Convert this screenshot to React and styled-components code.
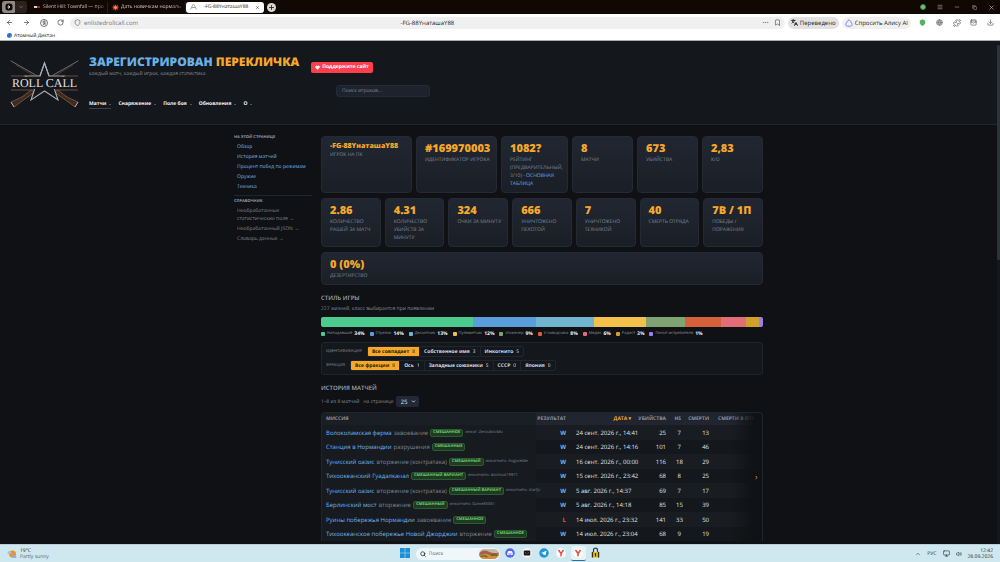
import React from "react";
import styled, { createGlobalStyle, css } from "styled-components";
import {
  ArrowLeft, ArrowRight, RotateCw, Shield, Bookmark, Languages, Puzzle, Download,
  Menu, Minus, Copy, X, Plus, ChevronDown, ChevronUp, Search, Heart, Volume2,
  Monitor, Ellipsis, ChevronRight, Globe, WalletCards,
} from "lucide-react";

const Global = createGlobalStyle`
  *, *::before, *::after { box-sizing: border-box; }
  body {
    margin: 0;
    background: #0f1114;
    color: #dfe5ee;
    font: 5px/8px "Open Sans", "Noto Sans", sans-serif;
    text-rendering: geometricPrecision;
    overflow: hidden;
  }
  button, input, select { font: inherit; color: inherit; margin: 0; padding: 0; border: 0; background: none; text-rendering: inherit; }
  a { color: inherit; text-decoration: none; }
  h1, h2, h3, p, ul, dl, dd { margin: 0; padding: 0; font-weight: inherit; font-size: inherit; }
  ul { list-style: none; }
  svg { display: block; flex: none; }
`;

const Screen = styled.div`
  display: flex;
  flex-direction: column;
  height: 100vh;
`;

/* ---------- browser ---------- */

const TabStrip = styled.div`
  display: flex;
  align-items: center;
  height: 14px;
  flex: none;
  padding: 0 5px 0 2px;
  background: #120803;
  color: #cdc7c4;
`;

const SpacesButton = styled.button`
  && {
    display: grid;
    place-items: center;
    width: ${(p) => (p.$main ? 13 : 12)}px;
    height: 12px;
    border-radius: ${(p) => (p.$main ? "3px 1px 1px 3px" : "1px 3px 3px 1px")};
    background: ${(p) => (p.$main ? "#8d8987" : "#2b211d")};
    color: ${(p) => (p.$main ? "#120803" : "#a8a19d")};
  }
`;

const Tab = styled.div`
  display: flex;
  align-items: center;
  gap: 2px;
  width: 78px;
  height: 11px;
  padding: 0 4px;
  border-radius: 3px;
  white-space: nowrap;
  ${(p) => p.$active && css`background: #fff; color: #22201e;`}
  ${(p) => !p.$active && css`border-right: 1px solid #2a1f1a; border-radius: 0; padding-right: 1px;`}
`;

const TabTitle = styled.span`
  flex: 1;
  text-align: ${(p) => (p.$center ? "center" : "left")};
  ${(p) => !p.$center && css`mask-image: linear-gradient(90deg, #000 80%, #0004);`}
`;

const TabList = styled.div`
  display: flex;
  align-items: center;
  margin-left: 3px;
`;

const NewTab = styled.button`
  && {
    display: grid;
    place-items: center;
    width: 9px;
    height: 9px;
    margin-left: 3px;
    border-radius: 50%;
    background: #d9d6d4;
    color: #2b211d;
  }
`;

const WindowButtons = styled.div`
  display: flex;
  align-items: center;
  gap: 9px;
  margin-left: auto;
  button { display: grid; place-items: center; width: 8px; height: 8px; }
`;

const GreenDot = styled.span`
  width: 6px;
  height: 6px;
  margin-right: 1px;
  border-radius: 50%;
  border: 1px solid #3c8446;
  background: #6fc276;
`;

const Toolbar = styled.div`
  display: flex;
  align-items: center;
  flex: none;
  height: 17px;
  padding: 0 1px;
  background: #fff;
  color: #222;
  font-size: 6px;
`;

const ToolButton = styled.button`
  && {
    display: grid;
    place-items: center;
    width: 17px;
    height: 13px;
    color: ${(p) => p.$color || "#4a4a4a"};
  }
`;

const AddressBar = styled.div`
  display: grid;
  grid-template-columns: 1fr auto 1fr;
  align-items: center;
  flex: 1;
  height: 12px;
  margin: 0 3px 0 1px;
  padding: 0 4px;
  border-radius: 6px;
  background: #f0f0f0;
`;

const AddressPart = styled.div`
  display: flex;
  align-items: center;
  gap: ${(p) => (p.$end ? 5 : 3)}px;
  justify-content: ${(p) => (p.$end ? "flex-end" : "flex-start")};
  color: #777;
`;

const Pill = styled.button`
  && {
    display: flex;
    align-items: center;
    gap: 2px;
    height: 12px;
    margin-right: 3px;
    padding: 0 3px;
    border-radius: 6px;
    background: ${(p) => (p.$strong ? "#e2e2e2" : "#f0f0f0")};
    color: #222;
    white-space: nowrap;
  }
`;

const BookmarkBar = styled.nav`
  display: flex;
  align-items: center;
  flex: none;
  height: 10px;
  padding: 0 7px;
  border-bottom: 1px solid #a9abad;
  background: #fff;
  color: #111;
  a { display: flex; align-items: center; gap: 2px; }
`;

const BlueDot = styled.i`
  width: 5px;
  height: 5px;
  border-radius: 50%;
  background: linear-gradient(135deg, #2a6fd0 55%, #9ed0f5);
`;

/* ---------- page ---------- */

const Viewport = styled.div`
  display: flex;
  flex: 1;
  min-height: 0;
  overflow: hidden;
`;

const Page = styled.div`
  flex: 1;
  min-width: 0;
  background: #0f1114;
`;

const Scrollbar = styled.div`
  width: 3px;
  padding-top: 4px;
  background: #14181c;
  &::before { content: ""; display: block; height: 43%; background: #2b333b; border-radius: 1px; }
`;

const SiteHeader = styled.header`
  display: flex;
  gap: 10px;
  padding: 13px 10px 15px;
  border-bottom: 1px solid #20262d;
  background: #14171b;
`;

const HeaderBody = styled.div`
  flex: 1;
`;

const BrandRow = styled.div`
  display: flex;
  align-items: center;
  gap: 12px;
`;

const SiteTitle = styled.h1`
  && { font-size: 12px; font-weight: 800; }
  line-height: 16px;
  color: #f6a82b;
  white-space: nowrap;
  span { color: #6ab1e8; }
`;

const Tagline = styled.p`
  color: #858d99;
`;

const SupportButton = styled.button`
  && {
    display: flex;
    align-items: center;
    gap: 2px;
    height: 11px;
    margin-top: 2px;
    padding: 0 4px;
    border-radius: 2px;
    background: #ff3f4e;
    color: #fff;
    font-weight: 700;
    white-space: nowrap;
  }
`;

const PlayerSearch = styled.input`
  && {
    display: block;
    width: 94px;
    height: 12px;
    margin: 7px 0 0 247px;
    padding: 0 5px;
    border: 1px solid #242b38;
    border-radius: 3px;
    background: #1d222c;
  }
  &::placeholder { color: #7d8694; }
`;

const SiteNav = styled.nav`
  display: flex;
  gap: 7px;
  margin-top: 3px;
  font-weight: 700;
  color: #eef2f8;
  a { display: flex; align-items: center; gap: 3px; border-bottom: 1px solid transparent; }
  a:first-child { border-color: #3a414b; }
  a::after { content: ""; border: 1px solid transparent; border-top-color: #8f97a3; margin-top: 1px; }
`;

const Layout = styled.div`
  display: grid;
  grid-template-columns: 78px minmax(0, 1fr);
  gap: 9px;
  width: 100%;
  max-width: 529px;
  margin: 0 auto;
  padding-top: 11px;
`;

const SideTitle = styled.h3`
  && { font-size: 4px; font-weight: 700; }
  margin-top: -2px;
  line-height: 8px;
  text-transform: uppercase;
  color: #949ca8;
`;

const SideList = styled.ul`
  display: flex;
  flex-direction: column;
  gap: 2px;
  padding: 1px 0 0 3px;
  color: ${(p) => (p.$muted ? "#7d8591" : "#6fb4ea")};
`;

const SideRule = styled.hr`
  height: 1px;
  margin: 4px 0;
  border: 0;
  background: #20262d;
`;

const Stats = styled.div`
  display: flex;
  flex-direction: column;
  gap: 5px;
`;

const StatRow = styled.dl`
  display: grid;
  grid-template-columns: ${(p) => p.$columns};
  gap: 4px;
`;

const StatCard = styled.div`
  display: flex;
  flex-direction: column-reverse;
  justify-content: flex-end;
  padding: 5px 2px 4px 8px;
  border: 1px solid #242a33;
  border-radius: 4px;
  background: linear-gradient(#212732, #1a1e26);
`;

const StatValue = styled.dd`
  font-size: ${(p) => (p.$small ? 7 : 11)}px;
  line-height: ${(p) => (p.$small ? 9 : 14)}px;
  font-weight: 800;
  color: #f6a82b;
  white-space: nowrap;
`;

const StatLabel = styled.dt`
  text-transform: uppercase;
  color: #848c98;
  a { color: #6fb4ea; }
`;

const SectionTitle = styled.h2`
  && { font-size: 6px; font-weight: 600; }
  margin-top: 9px;
  line-height: 8px;
  text-transform: uppercase;
  color: #a0a9b6;
`;

const Note = styled.p`
  margin-top: 3px;
  color: #848c98;
`;

const ClassBar = styled.div`
  display: flex;
  height: 10px;
  margin-top: 4px;
  border-radius: 2px;
  overflow: hidden;
`;

const ClassSlice = styled.div`
  flex: ${(p) => p.$share} 0 0;
  background: ${(p) => p.$color};
`;

const Legend = styled.ul`
  display: flex;
  gap: 5px;
  margin-top: 3px;
  font-size: 4px;
  white-space: nowrap;
  color: #8a929e;
  li { display: flex; align-items: center; gap: 2px; }
  b { font-size: 5px; color: #eef2f8; }
`;

const Swatch = styled.i`
  width: 4px;
  height: 4px;
  border-radius: 1px;
  background: ${(p) => p.$color};
`;

const Filters = styled.div`
  display: flex;
  flex-direction: column;
  gap: 3px;
  margin-top: 4px;
  padding: 3px 4px;
  border: 1px solid #1e252b;
  border-radius: 3px;
  background: #14181c;
`;

const FilterRow = styled.div`
  display: flex;
  align-items: center;
  gap: 5px;
  > span { font-size: 4px; color: #8a929e; }
`;

const Segments = styled.div`
  display: flex;
  border: 1px solid #20262d;
  border-radius: 2px;
  overflow: hidden;
`;

const Segment = styled.button`
  && {
    height: 9px;
    padding: 0 4px;
    font-weight: 700;
    white-space: nowrap;
    background: ${(p) => (p.$on ? "#f6a82b" : "transparent")};
    color: ${(p) => (p.$on ? "#2b2008" : "#d5dbe4")};
    & + & { border-left: 1px solid #20262d; }
  }
  small { margin-left: 3px; font-size: 5px; font-weight: 600; opacity: 0.75; }
`;

const Pager = styled.div`
  display: flex;
  align-items: center;
  gap: 4px;
  margin-top: 4px;
  color: #848c98;
  label { display: flex; align-items: center; gap: 2px; }
`;

const SelectWrap = styled.span`
  display: flex;
  align-items: center;
  width: 23px;
  height: 11px;
  padding: 0 3px 0 5px;
  border-radius: 2px;
  background: #222835;
  color: #e3e8ef;
  font-size: 6px;
  select { flex: 1; appearance: none; min-width: 0; }
`;

const TableFrame = styled.div`
  position: relative;
  margin-top: 5px;
  border: 1px solid #1f252d;
  border-bottom: 0;
  border-radius: 4px 4px 0 0;
  overflow: hidden;
`;

const MatchTable = styled.table`
  width: 458px;
  border-collapse: collapse;
  table-layout: fixed;
  white-space: nowrap;
  font-size: 6px;
`;

const HeadCell = styled.th`
  height: 12px;
  padding: ${(p) => (p.$left || p.$start ? "0 0 0 4px" : "0 5px 0 0")};
  font-size: 5px;
  font-weight: 700;
  text-align: ${(p) => (p.$left || p.$start ? "left" : "right")};
  text-transform: uppercase;
  background: ${(p) => (p.$left ? "#1a1e25" : "#20252f")};
  color: ${(p) => (p.$sorted ? "#f6a82b" : "#8d95a1")};
`;

const MatchRow = styled.tr`
  height: 14px;
  background: #14171b;
  &:nth-child(odd) { height: 15px; background: #191d22; }
`;

const Cell = styled.td`
  padding: 0 5px;
  text-align: right;
  color: #dfe5ee;
`;

const MissionCell = styled(Cell)`
  padding: 0 0 0 4px;
  text-align: left;
  color: #7d8591;
  background: #171b20;
  > div { display: flex; align-items: center; gap: 2px; }
  a { color: #6fb4ea; }
  small { font-size: 4px; }
`;

const ModeBadge = styled.span`
  padding: 0 2px;
  border: 1px solid #2d5a30;
  border-radius: 2px;
  background: #1e3a22;
  color: #6dd172;
  font-size: 4px;
  line-height: 6px;
  font-weight: 700;
  text-transform: uppercase;
`;

const Outcome = styled.b`
  color: ${(p) => (p.$win ? "#6fb4ea" : "#e2553f")};
`;

const ScrollHint = styled.div`
  position: absolute;
  inset: 0 0 0 auto;
  display: flex;
  align-items: center;
  justify-content: flex-end;
  width: 32px;
  padding-right: 3px;
  background: linear-gradient(90deg, transparent, #0f1114f0 75%);
  color: #f6a82b;
`;

/* ---------- taskbar ---------- */

const Taskbar = styled.footer`
  display: grid;
  grid-template-columns: 1fr auto 1fr;
  align-items: center;
  flex: none;
  height: 18px;
  padding: 0 7px;
  border-top: 1px solid #b9cdd3;
  background: #cfe8ef;
  color: #1c282d;
  line-height: 6px;
`;

const TaskGroup = styled.div`
  display: flex;
  align-items: center;
  gap: ${(p) => p.$gap}px;
  justify-content: ${(p) => (p.$end ? "flex-end" : "flex-start")};
  text-align: ${(p) => (p.$end ? "right" : "left")};
`;

const Faint = styled.div`
  color: #51646b;
`;

const TaskSearch = styled.label`
  display: flex;
  align-items: center;
  gap: 3px;
  width: 84px;
  height: 12px;
  margin: 0 1px;
  padding: 0 1px 0 4px;
  border-radius: 6px;
  background: #f0f7fa;
  input { flex: 1; min-width: 0; }
  input::placeholder { color: #5b666b; }
`;

const TaskButton = styled.button`
  && {
    display: grid;
    place-items: center;
    width: 15px;
    height: 15px;
    border-radius: 2px;
    background: ${(p) => (p.$active ? "#e6f4f8" : "transparent")};
    border-bottom: 1px solid ${(p) => (p.$active ? "#2e6f9c" : "transparent")};
  }
`;

function RollCallLogo() {
  return (
    <svg width="69" height="54" viewBox="0 0 69 54" aria-label="Roll Call">
      <g fill="none" strokeLinecap="round">
        <path d="M1 7 L31 24" stroke="#77787b" strokeWidth=".9" />
        <path d="M68 7 L38 24" stroke="#77787b" strokeWidth=".9" />
        <path d="M6 11 L24 22 M63 11 L45 22" stroke="#4c3a2d" strokeWidth=".9" />
        <path d="M22 39 L13 43 M47 39 L56 43" stroke="#8a8a8c" strokeWidth="1.6" />
      </g>
      <path d="M21 36 L25 38 L15 45 L4 53 L1 48 L12 43 Z" fill="#3d2c22" stroke="#8b6045" strokeWidth=".7" />
      <path d="M48 36 L44 38 L54 45 L65 53 L68 48 L57 43 Z" fill="#3d2c22" stroke="#8b6045" strokeWidth=".7" />
      <path d="M1 48 L4 53 M68 48 L65 53" stroke="#c7c7c7" strokeWidth=".8" />
      <path
        d="M34.500 9 L39 22 L54 22 L43 31 L48 46 L34.500 37 L21 46 L26 31 L15 22 L30 22 Z"
        fill="#14171b" stroke="#a9abaf" strokeWidth="1.100"
      />
      <rect x="1" y="23" width="67" height="12" fill="#14171b" />
      <path d="M1 22 H28 M41 22 H68 M1 36 H24 M45 36 H68" stroke="#76523a" strokeWidth=".9" />
      <path d="M30 22 L34.500 9 L39 22" fill="none" stroke="#a9abaf" strokeWidth="1.100" />
      <text x="34.500" y="33" textAnchor="middle" fontFamily="Liberation Serif, serif" fontSize="12" fill="#e0e1e3">
        ROLL CALL
      </text>
    </svg>
  );
}

function SpacesIcon() {
  return (
    <svg width="8" height="8" viewBox="0 0 16 16">
      <rect x="1" y="1" width="14" height="14" rx="5" fill="#120803" />
      <path d="M6 5l4 3-4 3M5 8h4" fill="none" stroke="#e8e4e2" strokeWidth="1.800" />
    </svg>
  );
}

function BurstIcon() {
  return (
    <svg width="7" height="7" viewBox="0 0 14 14">
      <path d="M7 0l1.500 4L12 1l-1 4 3 1-3 2 2 4-4-2-2 4-2-4-4 2 2-4-3-2 3-1-1-4 3.500 3z" fill="#e2452b" />
      <circle cx="7" cy="7" r="2.500" fill="#ff9a5c" />
    </svg>
  );
}

function AliceIcon() {
  return (
    <svg width="8" height="8" viewBox="0 0 16 16">
      <path d="M8 1.500c2 0 6.500 8 6.500 10S12 14.500 8 14.500s-6.500-1-6.500-3S6 1.500 8 1.500z" fill="none" stroke="#6a5cf0" strokeWidth="1.500" />
    </svg>
  );
}

function YandexIcon() {
  return (
    <svg width="10" height="10" viewBox="0 0 20 20">
      <circle cx="10" cy="10" r="9.500" fill="#fff" />
      <path d="M5 4l5 7 5-7M10 10v7" fill="none" stroke="#f2402f" strokeWidth="2.800" />
    </svg>
  );
}

function WindowsIcon() {
  return (
    <svg width="10" height="10" viewBox="0 0 19 19">
      <path d="M0 0h9v9H0zM10 0h9v9h-9zM0 10h9v9H0zM10 10h9v9h-9z" fill="#1c8fdc" />
    </svg>
  );
}

function DiscordIcon() {
  return (
    <svg width="10" height="10" viewBox="0 0 20 20">
      <circle cx="10" cy="10" r="9.500" fill="#5865f2" />
      <path d="M6 6.500q4-1.500 8 0 2 3.500 1.500 7l-2.500 1-1-1.500H8L7 14.500l-2.500-1Q4 10 6 6.500z" fill="#fff" />
      <circle cx="8" cy="10.500" r="1.200" fill="#5865f2" />
      <circle cx="12" cy="10.500" r="1.200" fill="#5865f2" />
    </svg>
  );
}

function MaskIcon() {
  return (
    <svg width="10" height="10" viewBox="0 0 20 20">
      <circle cx="10" cy="10" r="9.500" fill="#f6f6f6" />
      <rect x="3.500" y="5" width="13" height="10" rx="2" fill="#191919" />
      <path d="M6 9l3 1.500M14 9l-3 1.500" stroke="#e04a3a" strokeWidth="1.500" />
    </svg>
  );
}

function TelegramIcon() {
  return (
    <svg width="10" height="10" viewBox="0 0 20 20">
      <circle cx="10" cy="10" r="9.500" fill="#1f93d6" />
      <path d="M4 10l11-4.500-2 9.500-3.500-2.500L8 14v-3z" fill="#fff" />
    </svg>
  );
}

function LockIcon() {
  return (
    <svg width="9" height="12" viewBox="0 0 18 24">
      <path d="M5 12V6q0-4 4-4t4 4v6" fill="none" stroke="#3d3d3d" strokeWidth="2.500" />
      <rect x="1" y="10" width="16" height="11" rx="1" fill="#e8bd2c" />
      <path d="M3 10v11M15 10v11M9 12v7" stroke="#33300f" strokeWidth="2.500" />
    </svg>
  );
}

function LandscapeIcon() {
  return (
    <svg width="20" height="10" viewBox="0 0 40 20">
      <rect width="40" height="20" rx="10" fill="#c9b7a8" />
      <path d="M1 8q8-8 18-3t20 2v7H1z" fill="#a4604a" />
      <path d="M1 13q10-6 20-1t18-3q-1 10-10 11H10Q3 19 1 13z" fill="#d38a3a" />
      <path d="M3 15q8-3 14 1M24 13q6-3 13 0" fill="none" stroke="#4d6b3a" strokeWidth="2.500" />
    </svg>
  );
}

function WeatherIcon() {
  return (
    <svg width="10" height="10" viewBox="0 0 20 20">
      <circle cx="11" cy="10" r="7" fill="#f0912b" />
      <path d="M1 8q0-4 4-4 3 0 4 3 1 3-3 3H3Q1 10 1 8z" fill="#9fc0ea" />
      <path d="M9 16q0-3 3-3 2-2 4 0 3 0 3 3 0 2-2 2h-6q-2 0-2-2z" fill="#8ab0e4" />
    </svg>
  );
}

const classes = [
  ["Нападавший", 34, "#4bcb8e", 345],
  ["Стрелок", 14, "#5a9ddc", 141],
  ["Десантник", 13, "#70b4d0", 132],
  ["Пулеметчик", 12, "#f2c14c", 118],
  ["Инженер", 9, "#7fa371", 88],
  ["У наводчика", 8, "#d4613a", 80],
  ["Медик", 6, "#e26d78", 57],
  ["Радист", 3, "#cfa02a", 30],
  ["Пилот истребителя", 1, "#9a80ec", 9],
];

const statRows = [
  {
    columns: "91fr 81fr 67fr 61fr 61fr 61fr",
    cards: [
      ["-FG-88YнаташаY88", "Игрок на ПК", true],
      ["#169970003", "Идентификатор игрока"],
      ["1082?", <>Рейтинг (предварительный, 3/10) - <a href="#table">основная таблица</a></>],
      ["8", "Матчи"],
      ["673", "Убийства"],
      ["2,83", "K/D"],
    ],
  },
  {
    columns: "repeat(7, minmax(0, 1fr))",
    cards: [
      ["2.86", "Количество рашей за матч"],
      ["4.31", "Количество убийств за минуту"],
      ["324", "Очки за минуту"],
      ["666", "Уничтожено пехотой"],
      ["7", "Уничтожено техникой"],
      ["40", "Смерть отряда"],
      ["7В / 1П", "Победы / поражения"],
    ],
  },
  { columns: "1fr", cards: [["0 (0%)", "Дезертирство"]] },
];

const filters = [
  ["ИДЕНТИФИКАЦИЯ", [["Все совпадает", 8], ["Собственное имя", 3], ["Инкогнито", 5]]],
  ["ФРАКЦИЯ", [["Все фракции", 8], ["Ось", 1], ["Западные союзники", 5], ["СССР", 0], ["Япония", 0]]],
];

const matches = [
  ["Волоколамская ферма", "завоевание", "смешанное", "инког: ZerouknoMu", "W", "24 сент. 2026 г., 14:41", 25, 7, 13],
  ["Станция в Нормандии", "разрушения", "смешанные", "", "W", "24 сент. 2026 г., 14:16", 101, 7, 46],
  ["Тунисский оазис", "вторжение (контратака)", "смешанный", "инкогнито: Angoveide", "W", "16 сент. 2026 г., 00:00", 116, 18, 29],
  ["Тихоокеанский Гуадалканал", "", "смешанный вариант", "инкогнито: davincat19971", "W", "15 сент. 2026 г., 23:42", 68, 8, 25],
  ["Тунисский оазис", "вторжение (контратака)", "смешанный вариант", "инкогнито: startjv", "W", "5 авг. 2026 г., 14:37", 69, 7, 17],
  ["Берлинский мост", "вторжение", "смешанный", "инкогнито: Game85061", "W", "5 авг. 2026 г., 14:18", 85, 15, 39],
  ["Руины побережья Нормандии", "завоевание", "смешанное", "", "L", "14 июл. 2026 г., 23:32", 141, 33, 50],
  ["Тихоокеанское побережье Новой Джорджии", "вторжение", "смешанное", "", "W", "14 июл. 2026 г., 23:04", 68, 9, 19],
];

function Browser() {
  return (
    <>
      <TabStrip>
        <SpacesButton $main aria-label="Пространства"><SpacesIcon /></SpacesButton>
        <SpacesButton aria-label="Список"><ChevronDown size={6} /></SpacesButton>
        <TabList>
          <Tab>
            <svg width="7" height="5" viewBox="0 0 7 5"><rect y="1" width="3" height="2" fill="#d9d3d0" /><rect x="3" y="1" width="3" height="2" fill="#9b2520" /></svg>
            <TabTitle>Silent Hill: Townfall — про</TabTitle>
          </Tab>
          <Tab><BurstIcon /><TabTitle>Дать новичкам нормаль</TabTitle></Tab>
          <Tab $active>
            <svg width="7" height="6" viewBox="0 0 14 12"><path d="M1 11L5 3M13 11L9 3M4 7h6M4 3l3-2 3 2" fill="none" stroke="#8a8a8a" strokeWidth="1.500" /></svg>
            <TabTitle $center>-FG-88YнаташаY88</TabTitle>
            <X size={5} />
          </Tab>
        </TabList>
        <NewTab aria-label="Новая вкладка"><Plus size={7} strokeWidth={3} /></NewTab>
        <WindowButtons>
          <GreenDot />
          <button aria-label="Меню"><Menu size={6} /></button>
          <button aria-label="Свернуть"><Minus size={6} /></button>
          <button aria-label="Развернуть"><Copy size={5} /></button>
          <button aria-label="Закрыть"><X size={7} /></button>
        </WindowButtons>
      </TabStrip>
      <Toolbar>
        <ToolButton aria-label="Назад" $color="#222"><ArrowLeft size={7} /></ToolButton>
        <ToolButton aria-label="Вперёд" $color="#222"><ArrowRight size={7} /></ToolButton>
        <ToolButton aria-label="Яндекс">
          <svg width="8" height="8" viewBox="0 0 16 16"><circle cx="8" cy="8" r="7" fill="none" stroke="#444" strokeWidth="1.500" /><path d="M10 12V4H8.500Q6 4 6 6.300T8.500 8.500H10M8.500 8.500L6 12" fill="none" stroke="#444" strokeWidth="1.500" /></svg>
        </ToolButton>
        <ToolButton aria-label="Обновить" $color="#222"><RotateCw size={7} /></ToolButton>
        <AddressBar>
          <AddressPart><Shield size={7} color="#555" /><span>enlistedrollcall.com</span></AddressPart>
          <span>-FG-88YнаташаY88</span>
          <AddressPart $end><Ellipsis size={7} /><Bookmark size={7} color="#444" /></AddressPart>
        </AddressBar>
        <Pill $strong><Languages size={7} strokeWidth={3} />Переведено</Pill>
        <Pill><AliceIcon />Спросить Алису AI</Pill>
        <ToolButton aria-label="Защита" $color="#3f9a4a"><Shield size={7} fill="#58b062" /></ToolButton>
        <ToolButton aria-label="Сайт" $color="#7b7b7b"><Globe size={7} fill="#b5b5b5" /></ToolButton>
        <ToolButton aria-label="Расширения"><Puzzle size={8} /></ToolButton>
        <ToolButton aria-label="Коллекции"><WalletCards size={7} /></ToolButton>
        <ToolButton aria-label="Загрузки"><Download size={7} /></ToolButton>
      </Toolbar>
      <BookmarkBar><a href="#b"><BlueDot />Атомный Диктан</a></BookmarkBar>
    </>
  );
}

function Header() {
  return (
    <SiteHeader>
      <RollCallLogo />
      <HeaderBody>
        <BrandRow>
          <div>
            <SiteTitle><span>ЗАРЕГИСТРИРОВАН</span> ПЕРЕКЛИЧКА</SiteTitle>
            <Tagline>каждый матч, каждый игрок, каждая статистика</Tagline>
          </div>
          <SupportButton><Heart size={5} fill="#fff" />Поддержите сайт</SupportButton>
        </BrandRow>
        <PlayerSearch aria-label="Поиск игроков" placeholder="Поиск игроков..." />
        <SiteNav>
          {["Матчи", "Снаряжение", "Поле боя", "Обновления", "О"].map((t) => <a key={t} href="#n">{t}</a>)}
        </SiteNav>
      </HeaderBody>
    </SiteHeader>
  );
}

function Side() {
  return (
    <aside>
      <SideTitle>На этой странице</SideTitle>
      <SideList>
        {["Обзор", "История матчей", "Процент побед по режимам", "Оружие", "Техника"].map((t) => (
          <li key={t}><a href="#s">{t}</a></li>
        ))}
      </SideList>
      <SideRule />
      <SideTitle>Справочник</SideTitle>
      <SideList $muted>
        <li><a href="#r">Необработанные<br />статистические поля →</a></li>
        <li><a href="#r">Необработанный JSON →</a></li>
        <li><a href="#r">Словарь данных →</a></li>
      </SideList>
    </aside>
  );
}

function Matches() {
  return (
    <TableFrame>
      <MatchTable>
        <colgroup>
          {[214, 35, 65, 35, 15, 28, 66].map((w, i) => <col key={i} width={w} />)}
        </colgroup>
        <thead>
          <tr>
            <HeadCell $left>Миссия</HeadCell>
            <HeadCell>Результат</HeadCell>
            <HeadCell $sorted>Дата ▾</HeadCell>
            <HeadCell>Убийства</HeadCell>
            <HeadCell>HS</HeadCell>
            <HeadCell>Смерти</HeadCell>
            <HeadCell $start>Смерти в отр</HeadCell>
          </tr>
        </thead>
        <tbody>
          {matches.map(([name, mode, badge, alias, result, date, kills, hs, deaths], i) => (
            <MatchRow key={i}>
              <MissionCell>
                <div>
                  <a href="#m">{name}</a>{mode && <span>{mode}</span>}
                  <ModeBadge>{badge}</ModeBadge>{alias && <small>{alias}</small>}
                </div>
              </MissionCell>
              <Cell><Outcome $win={result === "W"}>{result}</Outcome></Cell>
              <Cell>{date}</Cell>
              <Cell>{kills}</Cell>
              <Cell>{hs}</Cell>
              <Cell>{deaths}</Cell>
              <Cell />
            </MatchRow>
          ))}
        </tbody>
      </MatchTable>
      <ScrollHint><ChevronRight size={5} strokeWidth={4} /></ScrollHint>
    </TableFrame>
  );
}

export default function App() {
  return (
    <Screen>
      <Global />
      <Browser />
      <Viewport>
        <Page>
          <Header />
          <Layout>
            <Side />
            <main>
              <Stats>
                {statRows.map((row, i) => (
                  <StatRow key={i} $columns={row.columns}>
                    {row.cards.map(([value, label, small]) => (
                      <StatCard key={value}>
                        <StatLabel>{label}</StatLabel>
                        <StatValue $small={small}>{value}</StatValue>
                      </StatCard>
                    ))}
                  </StatRow>
                ))}
              </Stats>
              <SectionTitle>Стиль игры</SectionTitle>
              <Note>227 жизней, класс выбирается при появлении</Note>
              <ClassBar>
                {classes.map(([name, , color, share]) => <ClassSlice key={name} $share={share} $color={color} />)}
              </ClassBar>
              <Legend>
                {classes.map(([name, pct, color]) => (
                  <li key={name}><Swatch $color={color} />{name} <b>{pct}%</b></li>
                ))}
              </Legend>
              <Filters>
                {filters.map(([label, options]) => (
                  <FilterRow key={label}>
                    <span>{label}</span>
                    <Segments>
                      {options.map(([name, count], i) => (
                        <Segment key={name} $on={i === 0}>{name}<small>{count}</small></Segment>
                      ))}
                    </Segments>
                  </FilterRow>
                ))}
              </Filters>
              <SectionTitle>История матчей</SectionTitle>
              <Pager>
                <span>1–8 из 8 матчей</span>
                <label htmlFor="size">на странице
                  <SelectWrap>
                    <select id="size" defaultValue="25"><option>25</option><option>50</option></select>
                    <ChevronDown size={5} strokeWidth={4} />
                  </SelectWrap>
                </label>
              </Pager>
              <Matches />
            </main>
          </Layout>
        </Page>
        <Scrollbar />
      </Viewport>
      <Taskbar>
        <TaskGroup $gap={3}>
          <WeatherIcon />
          <div><div>19°C</div><Faint>Partly sunny</Faint></div>
        </TaskGroup>
        <TaskGroup $gap={2}>
          <TaskButton aria-label="Пуск"><WindowsIcon /></TaskButton>
          <TaskSearch>
            <Search size={6} strokeWidth={3} />
            <input aria-label="Поиск" placeholder="Поиск" />
            <LandscapeIcon />
          </TaskSearch>
          <TaskButton aria-label="Discord"><DiscordIcon /></TaskButton>
          <TaskButton aria-label="Игра"><MaskIcon /></TaskButton>
          <TaskButton aria-label="Telegram"><TelegramIcon /></TaskButton>
          <TaskButton aria-label="Яндекс"><YandexIcon /></TaskButton>
          <TaskButton $active aria-label="Яндекс Браузер"><YandexIcon /></TaskButton>
          <TaskButton aria-label="Замок"><LockIcon /></TaskButton>
        </TaskGroup>
        <TaskGroup $gap={6} $end>
          <ChevronUp size={6} />
          <span>РУС</span>
          <Monitor size={7} />
          <Volume2 size={6} />
          <div><div>12:42</div><div>28.09.2026</div></div>
        </TaskGroup>
      </Taskbar>
    </Screen>
  );
}
